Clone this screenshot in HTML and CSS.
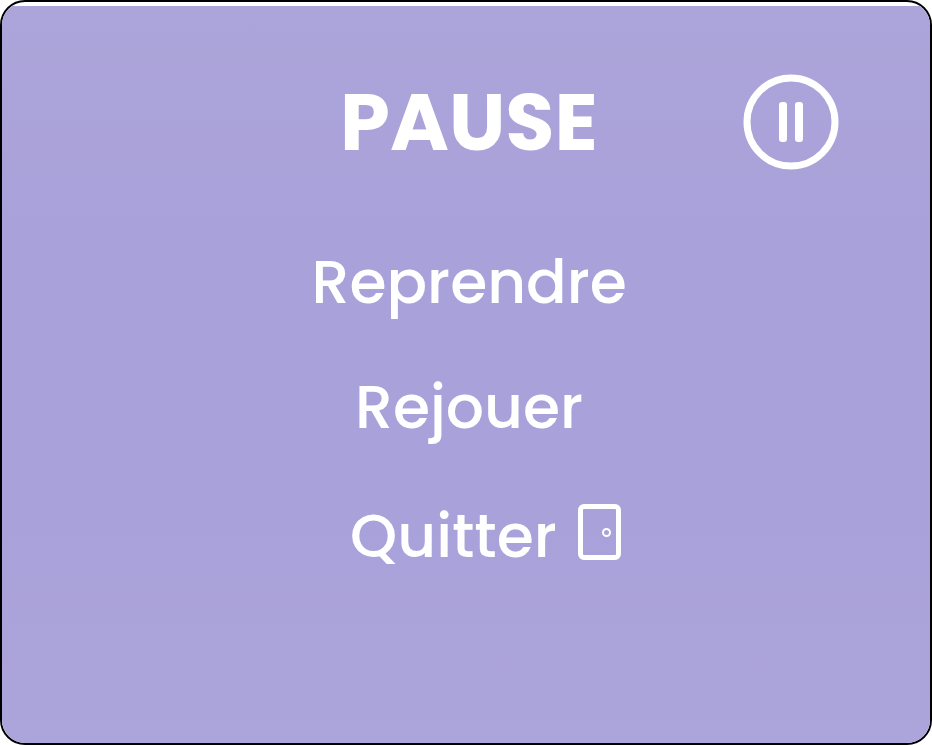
FILE: index.html
```html
<!DOCTYPE html>
<html lang="fr">
<head>
<meta charset="utf-8">
<title>Pause</title>
<link rel="stylesheet" href="styles.css">
</head>
<body>
<main class="frame">
  <section class="panel">
    <header class="header">
      <h1 class="title">PAUSE</h1>
      <svg class="pause-icon" viewBox="0 0 96 96" fill="none" stroke="#fff" aria-hidden="true">
        <circle cx="48" cy="48" r="44" stroke-width="7"/>
        <rect x="36" y="28" width="8" height="40" rx="3" fill="#fff" stroke="none"/>
        <rect x="52" y="28" width="8" height="40" rx="3" fill="#fff" stroke="none"/>
      </svg>
    </header>
    <nav class="menu">
      <a class="item resume">Reprendre</a>
      <a class="item replay">Rejouer</a>
      <a class="item quit"><span>Quitter</span>
        <svg class="door-icon" viewBox="0 0 43 56" fill="none" stroke="#fff" aria-hidden="true">
          <rect x="2.5" y="2.5" width="38" height="51" rx="3.5" stroke-width="5"/>
          <circle cx="28.5" cy="28.5" r="3.5" stroke-width="2"/>
        </svg>
      </a>
    </nav>
  </section>
</main>
</body>
</html>
```
FILE: styles.css
```css
* { box-sizing: border-box; }
body { margin: 0; background: #fff; }
.frame {
  width: 932px;
  height: 745px;
  padding-top: 4px;
  border: 2px solid #000;
  border-radius: 25px;
  overflow: hidden;
}
.panel {
  height: 100%;
  padding-top: 68px;
  color: #fff;
  font-family: Poppins, Inter, sans-serif;
  background: linear-gradient(#aca5da, #a9a1d9 30%, #a9a1d9 70%, #aca5db);
}
.header {
  display: flex;
  height: 96px;
  padding-left: 338px;
  padding-right: 91px;
  justify-content: space-between;
  align-items: center;
}
.title {
  margin: 0;
  font-size: 80px;
  font-weight: 700;
  line-height: 96px;
}
.pause-icon { width: 96px; height: 96px; }
.menu {
  display: flex;
  flex-direction: column;
  gap: 45px;
  padding-top: 72px;
}
.item {
  display: flex;
  height: 80px;
  align-items: center;
  font-size: 60px;
  font-weight: 500;
  line-height: 80px;
}
.resume { padding-left: 309.5px; }
.replay { padding-left: 353px; margin-bottom: 4px; }
.quit { padding-left: 348px; gap: 21px; }
.door-icon { width: 43px; height: 56px; margin-bottom: 8px; }
```
